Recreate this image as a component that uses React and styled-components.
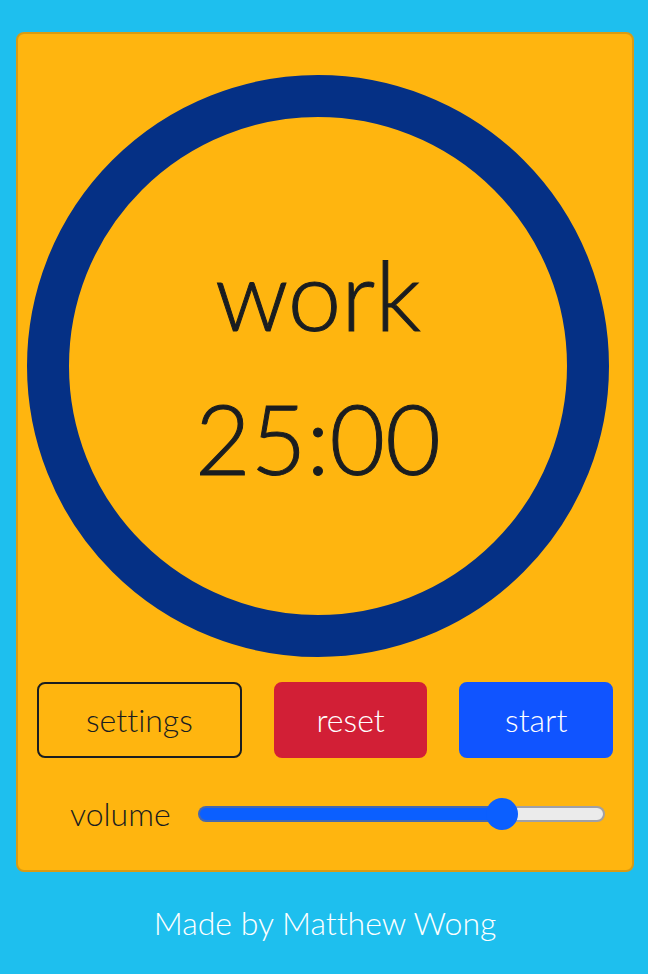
import React, { useState } from "react";
import styled, { createGlobalStyle } from "styled-components";

const GlobalStyle = createGlobalStyle`
  *, *::before, *::after { box-sizing: border-box; }
  body {
    margin: 0;
    background: #1ebfee;
    color: #1a1d20;
    font-family: Lato, sans-serif;
    font-weight: 300;
    font-size: 32px;
    line-height: 48px;
    font-variant-ligatures: none;
  }
`;

const Page = styled.main`
  display: flex;
  flex-direction: column;
  padding: 32px 14px 24px 16px;
`;

const Card = styled.section`
  display: flex;
  flex-direction: column;
  padding: 41px 19px 32px;
  border: 2px solid #d99b12;
  border-radius: 8px;
  background: #ffb50f;
`;

const Dial = styled.div`
  display: grid;
  margin: 0 4px 0 -10px;
  > * { grid-area: 1 / 1; }
`;

const Ring = styled.svg`
  display: block;
  width: 100%;
`;

const Readout = styled.div`
  align-self: center;
  text-align: center;
  font-size: 96px;
  line-height: 144px;
  -webkit-text-stroke: 1px currentColor;
`;

const Actions = styled.div`
  display: grid;
  grid-template-columns: 4fr 3fr 3fr;
  gap: 32px;
  margin-top: 25px;
`;

const Button = styled.button`
  height: 76px;
  padding: 0;
  border: 2px solid ${(p) => p.$line};
  border-radius: 8px;
  background: ${(p) => p.$fill};
  color: ${(p) => p.$ink};
  font: inherit;
  font-variant-ligatures: none;
  cursor: pointer;
`;

const Volume = styled.div`
  display: flex;
  align-items: center;
  gap: 27px;
  margin: 32px 8px 0 33px;
`;

const Slider = styled.input`
  flex: 1;
  min-width: 0;
  height: 32px;
  margin: 0;
  appearance: none;
  background: transparent;
  &::-webkit-slider-runnable-track {
    height: 16px;
    border: 2px solid rgba(110, 110, 120, 0.6);
    border-radius: 8px;
    background: linear-gradient(to right, #0b5fff var(--fill), #ebebeb var(--fill)) border-box;
  }
  &::-webkit-slider-thumb {
    appearance: none;
    width: 32px;
    height: 32px;
    margin-top: -10px;
    border-radius: 50%;
    background: #0b5fff;
  }
`;

const Footer = styled.footer`
  margin-top: 27px;
  color: #fff;
  text-align: center;
`;

export default function App() {
  const [volume, setVolume] = useState(77);
  return (
    <>
      <GlobalStyle />
      <Page>
        <Card>
          <Dial>
            <Ring viewBox="0 0 582 582" aria-hidden="true">
              <circle cx="291" cy="291" r="270" fill="none" stroke="#053085" strokeWidth="42" />
            </Ring>
            <Readout>
              <div>work</div>
              <div>25:00</div>
            </Readout>
          </Dial>
          <Actions>
            <Button type="button" $line="#1a1d20" $fill="transparent" $ink="#1a1d20">settings</Button>
            <Button type="button" $line="#d21f36" $fill="#d21f36" $ink="#fff">reset</Button>
            <Button type="button" $line="#1054ff" $fill="#1054ff" $ink="#fff">start</Button>
          </Actions>
          <Volume>
            <label htmlFor="volume">volume</label>
            <Slider
              id="volume"
              type="range"
              min="0"
              max="100"
              value={volume}
              style={{ "--fill": `${volume}%` }}
              onChange={(e) => setVolume(Number(e.target.value))}
            />
          </Volume>
        </Card>
        <Footer>Made by Matthew Wong</Footer>
      </Page>
    </>
  );
}
